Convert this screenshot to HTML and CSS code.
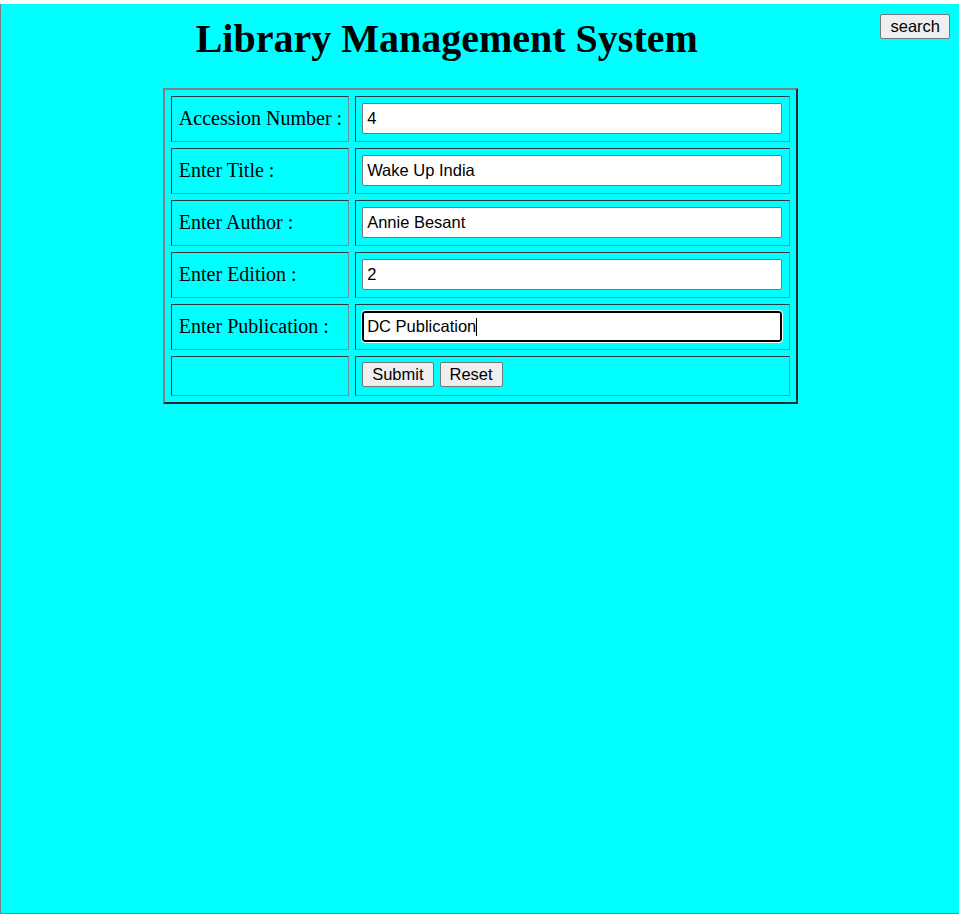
FILE: index.html
```html
<!DOCTYPE html>
<html>
<head>
<meta charset="utf-8">
<title>Library Management System</title>
<link rel="stylesheet" href="styles.css">
</head>
<body>
<div class="topstrip"></div>
<div class="frame">
  <div class="header">
    <h1 class="title">Library Management System</h1>
    <button class="btn search-btn" type="button">search</button>
  </div>
  <form class="book-form">
    <table class="form-table">
      <tr>
        <td class="label">Accession Number :</td>
        <td class="field"><input class="text-input" type="text" value="4"></td>
      </tr>
      <tr>
        <td class="label">Enter Title :</td>
        <td class="field"><input class="text-input" type="text" value="Wake Up India"></td>
      </tr>
      <tr>
        <td class="label">Enter Author :</td>
        <td class="field"><input class="text-input" type="text" value="Annie Besant"></td>
      </tr>
      <tr>
        <td class="label">Enter Edition :</td>
        <td class="field"><input class="text-input" type="text" value="2"></td>
      </tr>
      <tr>
        <td class="label">Enter Publication :</td>
        <td class="field"><div class="focus-wrap"><input class="text-input focused" type="text" value="DC Publication"><span class="caret"></span></div></td>
      </tr>
      <tr class="action-row">
        <td class="label"></td>
        <td class="field"><div class="actions"><button class="btn" type="button">Submit</button><button class="btn" type="button">Reset</button></div></td>
      </tr>
    </table>
  </form>
</div>
</body>
</html>
```

FILE: styles.css
```css
html, body {
  margin: 0;
  padding: 0;
  background: #ffffff;
}

body {
  font-family: "Liberation Serif", "Times New Roman", serif;
  color: #000;
}

.topstrip {
  height: 4px;
  background: #ffffff;
}

.frame {
  height: 909px;
  background: #00ffff;
  border-left: 1px solid #808080;
  border-bottom: 1px solid #808080;
}

.header {
  display: flex;
  align-items: flex-start;
}

.title {
  flex: 1;
  margin: 11px -12px 0 0;
  font-size: 40px;
  font-weight: bold;
  text-align: center;
  line-height: normal;
}

.btn {
  font-family: "Liberation Sans", Arial, sans-serif;
  font-size: 16.5px;
  line-height: 19px;
  color: #000;
  background: #efefef;
  border: 1px solid #767676;
  border-radius: 2px;
  padding: 2px 9px;
  margin: 0;
}

.search-btn {
  margin: 10px 9px 0 0;
  padding: 2px 9px;
}

.book-form {
  display: flex;
  justify-content: center;
  margin-top: 26px;
  padding-left: 1px;
}

.form-table {
  border: 2px outset #808080;
  border-spacing: 6px;
  border-collapse: separate;
}

.form-table td {
  border: 1px inset #6f8f8f;
  padding: 6px 6px 7px;
  vertical-align: middle;
}

.form-table td.label {
  width: 163px;
  font-size: 20px;
  white-space: nowrap;
  padding: 6px 6px 7px 7px;
}

.field {
  width: 421px;
}

.text-input {
  display: block;
  box-sizing: border-box;
  width: 420px;
  height: 31px;
  padding: 0 4px;
  font-family: "Liberation Sans", Arial, sans-serif;
  font-size: 16.5px;
  color: #000;
  background: #fff;
  border: 1px solid #767676;
  border-radius: 2px;
  margin: 0;
}

.focus-wrap {
  position: relative;
}

.text-input.focused {
  border: 2px solid #000;
  border-radius: 3px;
  padding: 0 3px;
  outline: 1px solid #fff;
  outline-offset: 0;
}

.caret {
  position: absolute;
  left: 114px;
  top: 7px;
  width: 1px;
  height: 18px;
  background: #000;
}

.action-row td {
  padding: 5px 6px 8px;
}

.actions {
  display: flex;
  gap: 6px;
}
```
